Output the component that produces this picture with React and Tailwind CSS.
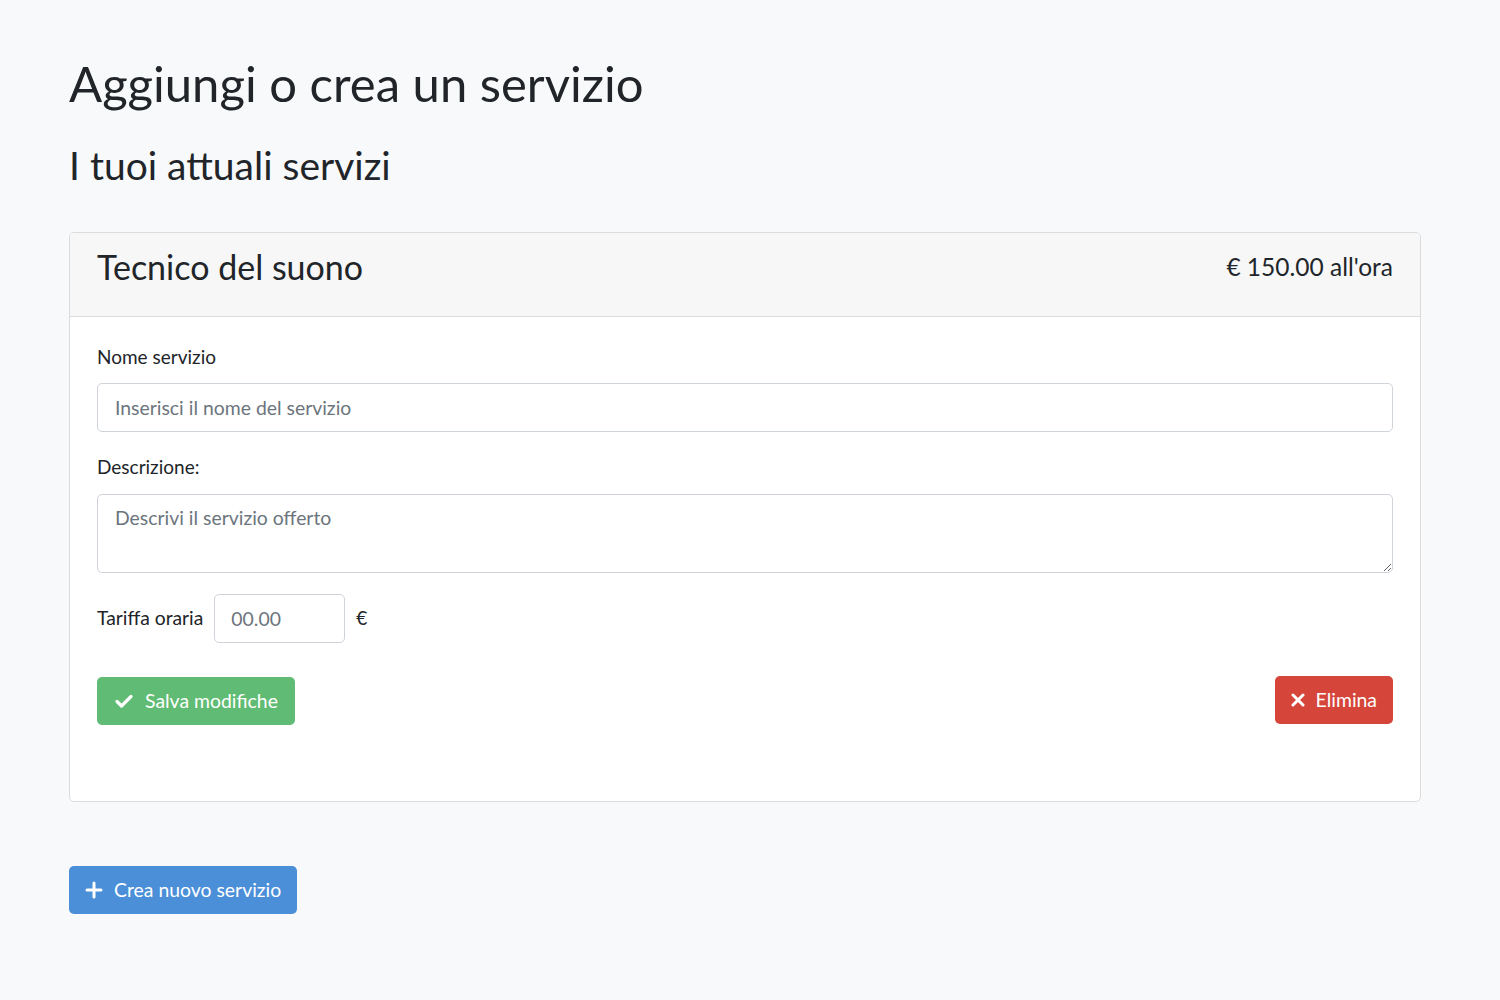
import React from "react";

const font = { fontFamily: "Lato, 'Noto Sans', sans-serif" };

export default function App() {
  return (
    <div className="min-h-[1000px] w-[1500px] bg-[#f8f9fa] text-[#212529] px-[69px] pt-[53px]" style={font}>
      <h1 className="text-[49px] leading-[60px] font-normal">Aggiungi o crea un servizio</h1>
      <h2 className="mt-[28px] text-[39px] leading-[48px] font-normal">I tuoi attuali servizi</h2>

      <div className="mt-[43px] w-[1352px] h-[570px] rounded-[5px] border border-[#dcdcdc] bg-white overflow-hidden flex flex-col">
        <div className="h-[84px] shrink-0 bg-[#f7f7f7] border-b border-[#dcdcdc] flex items-center justify-between px-[27px] pb-[15px]">
          <div className="text-[34px] leading-none">Tecnico del suono</div>
          <div className="text-[24.5px] leading-none">€ 150.00 all'ora</div>
        </div>
        <div className="px-[27px] pt-[27px] flex flex-col">
          <label className="text-[19px] leading-[26px]">Nome servizio</label>
          <input
            className="mt-[13px] h-[49px] w-full rounded-[5px] border border-[#ced4da] px-[17px] text-[19.4px] placeholder:text-[#6c757d] outline-none"
            style={font}
            placeholder="Inserisci il nome del servizio"
          />
          <label className="mt-[22px] text-[19px] leading-[26px]">Descrizione:</label>
          <textarea
            className="mt-[14px] h-[79px] w-full rounded-[5px] border border-[#ced4da] px-[17px] pt-[10px] text-[19.4px] leading-[26px] placeholder:text-[#6c757d] outline-none"
            style={font}
            placeholder="Descrivi il servizio offerto"
          />
          <div className="mt-[21px] flex items-center">
            <span className="text-[19.3px]">Tariffa oraria</span>
            <input
              className="ml-[11px] h-[49px] w-[131px] rounded-[5px] border border-[#ced4da] px-[16px] text-[19.4px] placeholder:text-[#6c757d] outline-none"
              style={font}
              placeholder="00.00"
            />
            <span className="ml-[11px] text-[19px]">€</span>
          </div>
          <div className="mt-[34px] flex items-center justify-between">
            <button className="h-[48px] rounded-[5px] bg-[#60bc74] text-white text-[19.4px] px-[17px] flex items-center gap-[11px]" style={font}>
              <svg width="20" height="20" viewBox="0 0 20 20" fill="none">
                <path d="M3 10.5l4.5 4.5L17 5.5" stroke="white" strokeWidth="3.2" strokeLinecap="round" strokeLinejoin="round" />
              </svg>
              Salva modifiche
            </button>
            <button className="-mt-[2px] h-[48px] rounded-[5px] bg-[#d5453a] text-white text-[19.4px] px-[16px] flex items-center gap-[11px]" style={font}>
              <svg width="14" height="14" viewBox="0 0 14 14" fill="none">
                <path d="M2 2l10 10M12 2L2 12" stroke="white" strokeWidth="3" strokeLinecap="round" />
              </svg>
              Elimina
            </button>
          </div>
        </div>
      </div>

      <button className="mt-[64px] h-[48px] rounded-[5px] bg-[#4a8fd8] text-white text-[19.4px] px-[16px] flex items-center gap-[11px]" style={font}>
        <svg width="18" height="18" viewBox="0 0 18 18" fill="none">
          <path d="M9 2v14M2 9h14" stroke="white" strokeWidth="3" strokeLinecap="round" />
        </svg>
        Crea nuovo servizio
      </button>
    </div>
  );
}
